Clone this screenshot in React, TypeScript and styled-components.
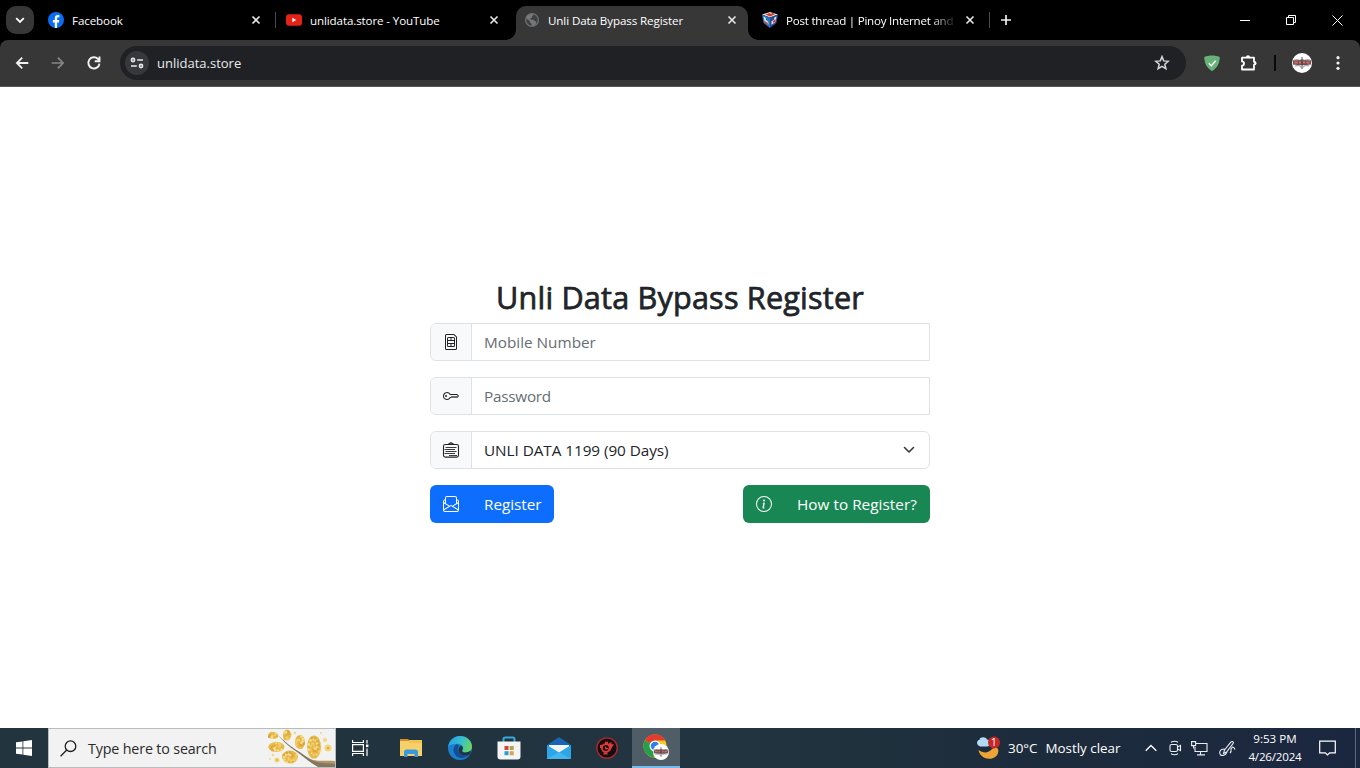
import React from 'react';
import styled, { createGlobalStyle } from 'styled-components';
import { BsSim, BsKey, BsEnvelopePaper, BsInfoCircle } from 'react-icons/bs';

const GlobalStyle = createGlobalStyle`
  * { box-sizing: border-box; }
  html, body { margin: 0; padding: 0; background: #fff; overflow: hidden; }
  body { font-family: 'Open Sans', 'Noto Sans', sans-serif; }
  svg { display: block; flex: none; }
  button, input { font-family: inherit; }
`;

const Screen = styled.div`
  width: 1360px;
  height: 768px;
  display: flex;
  flex-direction: column;
`;

const Label = styled.span<{ $size: number; $ls?: number; $color?: string }>`
  font-size: ${p => p.$size}px;
  letter-spacing: ${p => p.$ls ?? 0}px;
  color: ${p => p.$color ?? '#fff'};
  white-space: nowrap;
`;

/* ---------- Tab strip ---------- */

const TabStrip = styled.header`
  height: 40px;
  flex: none;
  display: flex;
  background: #000;
  padding-left: 6px;
`;

const TabSearch = styled.button`
  width: 28px;
  height: 28px;
  margin: 6px 6px 0 0;
  border: 0;
  padding: 0;
  border-radius: 10px;
  background: #373737;
  display: grid;
  place-items: center;
`;

const TabItem = styled.div<{ $active?: boolean }>`
  position: relative;
  width: 232px;
  height: 34px;
  margin-top: 6px;
  padding: 0 8px 6px;
  display: flex;
  align-items: center;
  gap: 8px;
  background: ${p => (p.$active ? '#373737' : 'transparent')};
  border-radius: 10px 10px 0 0;
  ${p =>
    p.$active &&
    `&::before, &::after {
      content: '';
      position: absolute;
      bottom: 0;
      width: 10px;
      height: 10px;
    }
    &::before { left: -10px; background: radial-gradient(circle at 0 0, transparent 9.5px, #373737 10px); }
    &::after { right: -10px; background: radial-gradient(circle at 100% 0, transparent 9.5px, #373737 10px); }`}
`;

const TabTitle = styled(Label)<{ $fade?: boolean }>`
  flex: 1;
  overflow: hidden;
  line-height: 18px;
  padding-top: 1px;
  ${p => p.$fade && 'mask-image: linear-gradient(90deg, #000 86%, transparent 102%);'}
`;

const TabGap = styled.div<{ $line: boolean }>`
  width: 6px;
  height: 16px;
  margin-top: 12px;
  display: flex;
  justify-content: center;
  &::after {
    content: '';
    width: 1px;
    margin-left: 1px;
    background: ${p => (p.$line ? '#4a4a4a' : 'transparent')};
  }
`;

const NewTab = styled.div`
  width: 28px;
  height: 40px;
  display: grid;
  place-items: center;
`;

const WindowButtons = styled.div`
  margin-left: auto;
  display: flex;
`;

const WindowButton = styled.div`
  width: 46px;
  height: 40px;
  display: grid;
  place-items: center;
`;

/* ---------- Toolbar ---------- */

const ToolbarBack = styled.div`
  flex: none;
  background: #000;
`;

const Toolbar = styled.nav`
  height: 47px;
  background: #373737;
  border-bottom: 1px solid #565656;
  border-radius: 8px 8px 0 0;
  display: flex;
  align-items: center;
  padding: 0 12px;
`;

const NavIcon = styled.div<{ $w: number }>`
  width: ${p => p.$w}px;
  height: 34px;
  display: flex;
  align-items: center;
`;

const AddressBar = styled.div`
  width: 1066px;
  height: 34px;
  margin-right: 18px;
  border-radius: 17px;
  background: #202124;
  display: flex;
  align-items: center;
  padding: 0 16px 0 5px;
  gap: 8px;
  & > svg:last-child { margin-left: auto; }
`;

const SiteInfo = styled.div`
  width: 24px;
  height: 24px;
  border-radius: 50%;
  background: #37383b;
  display: grid;
  place-items: center;
`;

const ToolDivider = styled.div`
  width: 2px;
  height: 16px;
  background: #0a0a0a;
`;

/* ---------- Page ---------- */

const Page = styled.main`
  flex: 1;
  background: #fff;
  display: flex;
  justify-content: center;
  padding-top: 191px;
`;

const Form = styled.form`
  width: 500px;
  display: flex;
  flex-direction: column;
`;

const Title = styled.h1`
  margin: 0 0 8px;
  height: 37px;
  line-height: 39px;
  font-size: 30.6px;
  letter-spacing: 0.2px;
  font-weight: 400;
  -webkit-text-stroke: 0.75px #212529;
  color: #212529;
  text-align: center;
  white-space: nowrap;
`;

const Group = styled.div<{ $round?: boolean }>`
  height: 38px;
  margin-bottom: 16px;
  display: flex;
  border: 1px solid #dee2e6;
  border-radius: ${p => (p.$round ? '6px' : '6px 0 0 6px')};
  overflow: hidden;
`;

const Addon = styled.div`
  width: 41px;
  background: #f8f9fa;
  border-right: 1px solid #dee2e6;
  color: #212529;
  display: grid;
  place-items: center;
`;

const Input = styled.input<{ $ls: number }>`
  flex: 1;
  border: 0;
  outline: 0;
  padding: 0 12px;
  font-size: 15.3px;
  letter-spacing: ${p => p.$ls}px;
  color: #212529;
  &::placeholder { color: #666d73; opacity: 1; }
`;

const Select = styled.div`
  flex: 1;
  padding: 0 12px;
  display: flex;
  align-items: center;
  justify-content: space-between;
`;

const Actions = styled.div`
  display: flex;
  justify-content: space-between;
`;

const Action = styled.button<{ $bg: string; $width: number }>`
  width: ${p => p.$width}px;
  height: 38px;
  border: 0;
  border-radius: 6px;
  background: ${p => p.$bg};
  color: #fff;
  padding: 0 0 0 13px;
  display: flex;
  align-items: center;
  gap: 25px;
`;

/* ---------- Taskbar ---------- */

const Taskbar = styled.footer`
  height: 40px;
  flex: none;
  display: flex;
  background: linear-gradient(90deg, #22343e 0%, #21343f 55%, #1d2c3c 75%, #1b2740 100%);
`;

const TaskSlot = styled.div<{ $active?: boolean; $w?: number }>`
  width: ${p => p.$w ?? 49}px;
  height: 40px;
  display: grid;
  place-items: center;
  ${p => p.$active && 'background: #4e5d66; border-bottom: 2px solid #76b9ed;'}
`;

const SearchBox = styled.div`
  width: 288px;
  height: 40px;
  background: #f2f2f2;
  border: 1px solid #b9bcbe;
  display: flex;
  align-items: center;
  padding-left: 11px;
  gap: 11px;
  & > svg:last-child { margin-left: auto; }
`;

const Tray = styled.div`
  margin-left: auto;
  display: flex;
  align-items: center;
`;

const Weather = styled.div`
  display: flex;
  align-items: center;
  gap: 8px;
  width: 164px;
`;

const TrayIcon = styled.div<{ $w: number }>`
  width: ${p => p.$w}px;
  display: flex;
  align-items: center;
  justify-content: center;
`;

const Clock = styled.div`
  width: 64px;
  display: flex;
  flex-direction: column;
  align-items: center;
  line-height: 18px;
  padding-bottom: 1px;
`;

const ShowDesktop = styled.div`
  width: 5px;
  height: 40px;
  border-left: 1px solid #5d6979;
`;

const WeatherBadge = styled.div`
  position: relative;
  width: 24px;
  height: 24px;
  span {
    position: absolute;
    left: 15px;
    top: 0;
    font-size: 10px;
    line-height: 13px;
    color: #fff;
  }
`;

/* ---------- Drawings ---------- */

const CloseGlyph = () => (
  <svg width="16" height="16" viewBox="0 0 16 16" stroke="#e8e8e8" strokeWidth="1.6">
    <path d="M4.5 4.500l7 7M11.500 4.500l-7 7" />
  </svg>
);

const FacebookIcon = () => (
  <svg width="16" height="16" viewBox="0 0 16 16">
    <circle cx="8" cy="8" r="8" fill="#0b6cf4" />
    <path fill="#fff" d="M6.8 16v-5.6H4.9V8h1.9V6.7c0-2.6 1.2-3.6 3.2-3.6.6 0 1 .05 1.4.13v2.1h-1c-1 0-1.3.5-1.3 1.4V8h2.2l-.4 2.4H9.1V16z" />
  </svg>
);

const YouTubeIcon = () => (
  <svg width="16" height="16" viewBox="0 0 16 16">
    <rect y="2.2" width="16" height="11.6" rx="3" fill="#e62117" />
    <path d="M6.3 5.7v4.6l4-2.3z" fill="#fff" />
  </svg>
);

const GlobeIcon = () => (
  <svg width="16" height="16" viewBox="0 0 16 16">
    <circle cx="8" cy="8" r="6.4" fill="#3f4143" stroke="#6c6e70" strokeWidth="1.3" />
    <path fill="#757779" d="M2 6.3c1-2.7 3.400-4.600 6.300-4.700L9.600 3 8 4.200v1.500l-1.700.8.500 1.200h2.700l1 1.400 1.800.4-.5 2.600-2.600 2.100-1.700-.3.300-2-1.800-1.500-.4-1.600z" />
  </svg>
);

const CubeIcon = () => (
  <svg width="16" height="16" viewBox="0 0 16 16">
    <path d="M8 0l8 2.600-8 3-8-3z" fill="#e8e3e0" />
    <path d="M0 2.600l8 3V16l-6.500-5z" fill="#2676bd" />
    <path d="M16 2.600l-8 3V16l6.500-5z" fill="#2b4d94" />
    <path d="M3.500 2.500l4-1.600 1.200.8 2-.7 2.300 1.300-5 2.200z" fill="#d43a2b" />
    <path d="M1.400 4.500l2 1 .5 2.500 2.400 1.700.2 2.700-3.800-3z" fill="#e9eef5" />
    <path d="M2.500 8.500l3.600 2.500v2.300l-3-2.200z" fill="#e04a32" />
    <path d="M14.500 4.500l-2 .8-.5 2.500-2.500 1.500v3.500l3.700-2.600z" fill="#dce6f2" />
    <path d="M13.500 7l-3 2.500 1 1.500 1.600-1.200z" fill="#d63c2b" />
  </svg>
);

const SettingsGlyph = () => (
  <svg width="14" height="14" viewBox="0 0 14 14" fill="none" stroke="#e8eaed" strokeWidth="1.6">
    <circle cx="3" cy="4" r="1.600" />
    <path d="M7.200 4H13M1 10h5.800" />
    <circle cx="11" cy="10" r="1.600" />
  </svg>
);

const StarIcon = () => (
  <svg width="16" height="16" viewBox="0 0 16 16" fill="none" stroke="#d5d6d8" strokeWidth="1.500">
    <path d="M8 1.600l1.700 4.300 4.600.35-3.500 3 1.100 4.500L8 11.300l-3.900 2.450 1.100-4.500-3.500-3 4.600-.35z" />
  </svg>
);

const ShieldIcon = () => (
  <svg width="16" height="17" viewBox="0 0 16 17">
    <path d="M8 .5C5.500.5 2.500 1 .3 2c0 2.500 0 9.200 7.700 14.300C15.700 11.200 15.700 4.500 15.700 2 13.500 1 10.500.5 8 .5z" fill="#67b279" />
    <path d="M4.800 8.200l2.600 2.600 4.300-5" fill="none" stroke="#fff" strokeWidth="1.400" />
  </svg>
);

const PuzzleIcon = () => (
  <svg width="18" height="18" viewBox="0 0 18 18">
    <path
      d="M3 3.700h11v4.100a1.400 1.400 0 0 1 0 2.800V15.500H2v-3.800c2.700-.3 2.700-4 0-4.300V3.700z"
      fill="none"
      stroke="#fff"
      strokeWidth="1.800"
      strokeLinejoin="round"
    />
    <path d="M6 3.300a2 2 0 0 1 4 0zM14.500 7.200a2 2 0 0 1 0 4z" fill="#fff" />
  </svg>
);

const Badge = ({ size }: { size: number }) => (
  <svg width={size} height={size} viewBox="0 0 20 20">
    <circle cx="10" cy="10" r="10" fill="#fff" />
    <path d="M1 7q4-1.200 6.500-.2L10 6l2.500.8q3-1 6.500.2v1.500H1z" fill="#8d8d92" />
    <path d="M1 8q9-1.500 18 0v3.500q-9 1.300-18 0z" fill="#6d5055" />
    <path d="M2.500 8.600h3.200v1.800H2.500zM7 8.400h2v2H7zM11 8.400h2.200v1.900H11zM14.500 8.600h3v1.800h-3z" fill="#e4685e" />
    <path d="M3 13q3.500-1 5.500.3L10 16l1.500-2.700Q14 12 17 13" fill="none" stroke="#8b8b90" strokeWidth=".9" />
    <path d="M10 4v10.500" stroke="#4a4448" strokeWidth=".9" />
  </svg>
);

const CardIcon = () => (
  <svg width="18" height="16" viewBox="0 0 18 16" fill="none" stroke="#212529">
    <rect x="1.500" y="2.500" width="15" height="12.600" rx="1.800" strokeWidth="1.100" />
    <path d="M6 2.500L9 .7l3 1.800" strokeWidth="1.100" />
    <path d="M3.500 5.500h11M2.500 7.500h10.500M3.500 9.500h11M2.500 11.500h10.500M7 13.500h8" strokeWidth=".9" />
  </svg>
);

const clusters = [
  [5, 6.500, 5, 3.500],
  [19, 6, 4, 5.500],
  [32, 13, 5, 7],
  [8.500, 18, 8, 5],
  [22, 28, 8, 6.500],
  [46, 18, 7, 11.500],
];
const shades = ['#f3d06b', '#e9bb48', '#d9a640', '#f7dd8a', '#e5b54a'];
const petals = clusters.flatMap(([cx, cy, rx, ry], c) =>
  Array.from({ length: Math.round(rx * ry * 0.55) }, (_, i, ) => {
    const r = Math.sqrt((i + 0.5) / (rx * ry * 0.55)) * 0.88;
    const a = i * 2.4 + c;
    return { x: cx + rx * r * Math.cos(a), y: cy + ry * r * Math.sin(a), fill: shades[(i * 3 + c) % shades.length] };
  })
);

const SearchArt = () => (
  <svg width="67" height="38" viewBox="0 0 67 38">
    {clusters.map(([cx, cy, rx, ry]) => (
      <ellipse key={cx} cx={cx} cy={cy} rx={rx} ry={ry} fill="#e8bc4a" />
    ))}
    {petals.map((p, i) => (
      <circle key={i} cx={p.x} cy={p.y} r="1.300" fill={p.fill} />
    ))}
    <g fill="#f5d777">
      <circle cx="57" cy="11" r="2" /><circle cx="60" cy="19" r="3.500" /><circle cx="5" cy="26" r="1.300" />
      <circle cx="9" cy="31" r="2.600" /><circle cx="2" cy="30" r="1" /><circle cx="27" cy="4" r="1.200" />
      <circle cx="53" cy="4" r="1" />
    </g>
    <circle cx="60" cy="19" r="1.300" fill="#e0aa3c" />
    <circle cx="9" cy="31" r="1" fill="#e0aa3c" />
    <path d="M8 4c9 9 14 13 22 18 7 4 10 8 18 10h19v6H50c-9-5-14-10-21-15C20 17 14 11 8 4z" fill="#85765f" />
    <path d="M42 30c8 3 16 1 25 2v3c-9-1-17 0-25-5z" fill="#b0975f" />
  </svg>
);

const FolderIcon = () => (
  <svg width="22" height="20" viewBox="0 0 22 20">
    <path d="M0 1h8l2 2H0z" fill="#d9902a" />
    <path d="M0 3h22v15H0z" fill="#f6d068" />
    <path d="M9 2h13v3H9z" fill="#f3c350" />
    <path d="M4 19v-5q0-2.500 2.500-2.500h9Q18 11.500 18 14v5h-3.500v-3h-7v3z" fill="#3a9ae0" />
  </svg>
);

const EdgeIcon = () => (
  <svg width="24" height="24" viewBox="0 0 24 24">
    <defs>
      <linearGradient id="edgeTop" x1="0" y1=".3" x2="1" y2=".6">
        <stop offset="0" stopColor="#2a9ee4" />
        <stop offset=".5" stopColor="#36bfd0" />
        <stop offset="1" stopColor="#6bd65a" />
      </linearGradient>
    </defs>
    <circle cx="12" cy="12" r="12" fill="#1b7fd0" />
    <path d="M.2 10.500C1.300 4.500 6 0 12 0c7 0 12 5 12 10.500 0 4-3.400 6-6.500 6-2.700 0-3.900-1.100-3-2.300 1.900-2.500-.3-6.400-5-6.400C5.500 7.800 1 9 .2 10.500z" fill="url(#edgeTop)" />
    <path d="M9 8.300c-4 1.800-4.500 7-1.700 10.700 2.900 3.700 8.700 4.300 14.500-.5-2 .9-8.300 1.500-11-2.200C9 13.600 9.600 11 11.500 9.800z" fill="#124d96" />
    <path d="M13.600 9.800c1.500 1.500 1.600 3 .6 4.400-.7 1.400 1.300 2.300 3.300 2.300 1.900 0 3.800-.8 5-2 .5 1.500.2 2.700-.6 4-3 1.200-8 1.400-10.400-1.500-1.900-2.600-1.300-6.300 2.100-7.200z" fill="#21353f" />
  </svg>
);

const StoreIcon = () => (
  <svg width="24" height="24" viewBox="0 0 24 24">
    <path d="M6.500 6V3.200Q6.500 1.500 8.200 1.500h7.600q1.700 0 1.700 1.700V6" fill="none" stroke="#35a9dc" strokeWidth="2" />
    <path d="M.5 5.500h23v15q0 3-3 3h-17q-3 0-3-3z" fill="#f4f4f4" />
    <path d="M7.500 10h4v4h-4z" fill="#d9432f" /><path d="M12.700 10h4v4h-4z" fill="#b3a050" />
    <path d="M7.500 15.200h4v4h-4z" fill="#2b9ad8" /><path d="M12.700 15.200h4v4h-4z" fill="#d0a450" />
  </svg>
);

const MailIcon = () => (
  <svg width="24" height="22" viewBox="0 0 24 22">
    <path d="M0 8L12 0l12 8v3H0z" fill="#1865b5" />
    <path d="M2 8h20v3l-10 7L2 11z" fill="#f2f5f8" />
    <path d="M0 8l12 7.500L24 8v14H0z" fill="#2ea5e6" />
    <path d="M0 22l12-7 12 7z" fill="#45b6ee" />
    <path d="M3 8h18l-9 6z" fill="#f2f5f8" />
  </svg>
);

const RedDiskIcon = () => (
  <svg width="22" height="22" viewBox="0 0 22 22">
    <circle cx="11" cy="11" r="10.200" fill="#130f12" stroke="#b3262b" strokeWidth="1.300" />
    <circle cx="9.800" cy="11" r="3.900" fill="none" stroke="#e23a36" strokeWidth="1.800" />
    <path d="M9 4.800h3v2.500H9zM4 8h2.500v3H4zM7.500 15.500h4v2h-4zM12 7l3.500-2v2.300H18l-2.500 4-1.500 3-2-1 1.500-3z" fill="#e23a36" />
    <path d="M9.600 9.500v2.200h2.500" fill="none" stroke="#e23a36" strokeWidth="1.300" />
  </svg>
);

const ChromeIcon = () => (
  <svg width="26" height="26" viewBox="0 0 26 26">
    <circle cx="12" cy="12" r="11.500" fill="#f7c927" />
    <path d="M12 12L2 6.200A11.500 11.500 0 0 0 11 23.500z" fill="#24a148" />
    <path d="M12 12L2 6.200A11.500 11.500 0 0 1 22.200 6.500H12z" fill="#e33b2e" />
    <circle cx="12" cy="12" r="5.500" fill="#fff" />
    <circle cx="12" cy="12" r="4.200" fill="#2f7de9" />
    <g transform="translate(10 10)"><Badge size={16} /></g>
  </svg>
);

const WeatherIcon = () => (
  <svg width="24" height="24" viewBox="0 0 24 24">
    <path d="M20.500 11.500c3.500 1.500 2.600 11-7 11.300C7 23 3 18 2.500 14c4 3 9 3.500 12.500 0 1.500-1.500 3-2.600 5.500-2.500z" fill="#eda336" />
    <path d="M4 10.500a3.500 3.500 0 0 1-.5-6.800C4 .500 10 .5 11 3.500c4 0 4 7 0 7z" fill="#b4dbf4" />
    <circle cx="18" cy="6.500" r="6" fill="#c62828" />
  </svg>
);

const tabs = [
  { title: 'Facebook', icon: <FacebookIcon />, ls: -0.1, line: true },
  { title: 'unlidata.store - YouTube', icon: <YouTubeIcon />, ls: -0.12, line: false },
  { title: 'Unli Data Bypass Register', icon: <GlobeIcon />, ls: -0.1, line: false, active: true },
  { title: 'Post thread | Pinoy Internet and', icon: <CubeIcon />, ls: -0.24, line: true, fade: true },
];

export default function App() {
  return (
    <Screen>
      <GlobalStyle />
      <TabStrip>
        <TabSearch type="button">
          <svg width="12" height="12" viewBox="0 0 12 12" fill="none" stroke="#fff" strokeWidth="1.800">
            <path d="M2.200 4.200L6 8l3.800-3.800" />
          </svg>
        </TabSearch>
        {tabs.map(t => (
          <React.Fragment key={t.title}>
            <TabItem $active={t.active}>
              {t.icon}
              <TabTitle $size={11.6} $ls={t.ls} $fade={t.fade}>{t.title}</TabTitle>
              <CloseGlyph />
            </TabItem>
            <TabGap $line={t.line} />
          </React.Fragment>
        ))}
        <NewTab>
          <svg width="12" height="12" viewBox="0 0 12 12" stroke="#f1f1f1" strokeWidth="1.700">
            <path d="M6 1v10M1 6h10" />
          </svg>
        </NewTab>
        <WindowButtons>
          <WindowButton>
            <svg width="10" height="11" viewBox="0 0 10 11"><path d="M0 5.500h10" stroke="#fff" /></svg>
          </WindowButton>
          <WindowButton>
            <svg width="10" height="10" viewBox="0 0 10 10" fill="none" stroke="#fff">
              <path d="M.5 2.500h7v7h-7zM2.500 2.500v-2h7v7h-2" />
            </svg>
          </WindowButton>
          <WindowButton>
            <svg width="11" height="11" viewBox="0 0 11 11" stroke="#fff"><path d="M.5.5l10 10M10.500.5l-10 10" /></svg>
          </WindowButton>
        </WindowButtons>
      </TabStrip>

      <ToolbarBack>
        <Toolbar>
          <NavIcon $w={36}>
            <svg width="20" height="20" viewBox="0 0 20 20" fill="none" stroke="#f1f1f1" strokeWidth="1.800">
              <path d="M16.300 10H5M10.200 4.700L4.900 10l5.300 5.300" />
            </svg>
          </NavIcon>
          <NavIcon $w={36}>
            <svg width="20" height="20" viewBox="0 0 20 20" fill="none" stroke="#868686" strokeWidth="1.700">
              <path d="M3.700 10H15M9.800 4.700l5.300 5.300-5.300 5.300" />
            </svg>
          </NavIcon>
          <NavIcon $w={36}>
            <svg width="20" height="20" viewBox="0 0 20 20" fill="none" stroke="#f1f1f1" strokeWidth="1.900">
              <path d="M15.500 10.600A5.600 5.600 0 1 1 14 6L15 7M15.500 3.500v4.800h-4.800" />
            </svg>
          </NavIcon>
          <AddressBar>
            <SiteInfo><SettingsGlyph /></SiteInfo>
            <Label $size={13} $color="#e8eaed">unlidata.store</Label>
            <StarIcon />
          </AddressBar>
          <NavIcon $w={36}><ShieldIcon /></NavIcon>
          <NavIcon $w={34}><PuzzleIcon /></NavIcon>
          <NavIcon $w={18}><ToolDivider /></NavIcon>
          <NavIcon $w={40}><Badge size={20} /></NavIcon>
          <svg width="12" height="16" viewBox="0 0 12 16" fill="#f1f1f1">
            <circle cx="6" cy="2.700" r="1.600" /><circle cx="6" cy="8" r="1.600" /><circle cx="6" cy="13.300" r="1.600" />
          </svg>
        </Toolbar>
      </ToolbarBack>

      <Page>
        <Form>
          <Title>Unli Data Bypass Register</Title>
          <Group>
            <Addon><BsSim size={16} /></Addon>
            <Input $ls={0} placeholder="Mobile Number" />
          </Group>
          <Group>
            <Addon><BsKey size={16} /></Addon>
            <Input $ls={-0.25} placeholder="Password" />
          </Group>
          <Group $round>
            <Addon><CardIcon /></Addon>
            <Select>
              <Label $size={15.3} $ls={-0.05} $color="#212529">UNLI DATA 1199 (90 Days)</Label>
              <svg width="16" height="16" viewBox="0 0 16 16" fill="none" stroke="#343a40" strokeWidth="1.600" strokeLinecap="round" strokeLinejoin="round">
                <path d="M3.500 5.500L8 10l4.500-4.500" />
              </svg>
            </Select>
          </Group>
          <Actions>
            <Action type="button" $bg="#0d6efd" $width={124}>
              <BsEnvelopePaper size={16} />
              <Label $size={15.3} $ls={-0.05}>Register</Label>
            </Action>
            <Action type="button" $bg="#198754" $width={187}>
              <BsInfoCircle size={16} />
              <Label $size={15.3} $ls={0.03}>How to Register?</Label>
            </Action>
          </Actions>
        </Form>
      </Page>

      <Taskbar>
        <TaskSlot $w={48}>
          <svg width="16" height="16" viewBox="0 0 16 16" fill="#fff">
            <path d="M0 2.300L6.500 1.400v6.200H0zM7.300 1.300L16 0v7.600H7.300zM0 8.400h6.500v6.200L0 13.700zM7.300 8.400H16V16l-8.700-1.300z" />
          </svg>
        </TaskSlot>
        <SearchBox>
          <svg width="17" height="17" viewBox="0 0 17 17" fill="none" stroke="#1d1d1d" strokeWidth="1.300">
            <circle cx="10.500" cy="6.200" r="5.300" /><path d="M6.700 10L.6 16.200" />
          </svg>
          <Label $size={14.3} $ls={-0.16} $color="#2b2b2b">Type here to search</Label>
          <SearchArt />
        </SearchBox>
        <TaskSlot>
          <svg width="17" height="16" viewBox="0 0 17 16" fill="none" stroke="#fff" strokeWidth="1.200">
            <path d="M.6 4.600h10.800v6.800H.6zM.6 0v2.500h10.800V0M.6 16v-2.500h10.800V16M15 0v3.500M15 8.500V16" />
            <path d="M14 4.500h2.400v2.600H14z" fill="#fff" stroke="none" />
          </svg>
        </TaskSlot>
        <TaskSlot $w={52}><FolderIcon /></TaskSlot>
        <TaskSlot $w={46}><EdgeIcon /></TaskSlot>
        <TaskSlot $w={52}><StoreIcon /></TaskSlot>
        <TaskSlot $w={47}><MailIcon /></TaskSlot>
        <TaskSlot $w={50}><RedDiskIcon /></TaskSlot>
        <TaskSlot $active $w={48}><ChromeIcon /></TaskSlot>
        <Tray>
          <Weather>
            <WeatherBadge><WeatherIcon /><span>1</span></WeatherBadge>
            <Label $size={13.4}>30°C</Label>
            <Label $size={13.4}>Mostly clear</Label>
          </Weather>
          <TrayIcon $w={22}>
            <svg width="12" height="8" viewBox="0 0 12 8" fill="none" stroke="#fff" strokeWidth="1.300"><path d="M.7 6.800L6 1.500l5.300 5.300" /></svg>
          </TrayIcon>
          <TrayIcon $w={26}>
            <svg width="13" height="16" viewBox="0 0 13 16" fill="none" stroke="#e9edf2" strokeWidth="1.100">
              <rect x="1" y="4.500" width="7.500" height="7" rx="1.500" /><path d="M8.500 7l3-1.500v5L8.500 9M2 2.200Q5.500.2 9 2.200M2 13.800q3.500 2 7 0" />
            </svg>
          </TrayIcon>
          <TrayIcon $w={23}>
            <svg width="17" height="15" viewBox="0 0 17 15" fill="none" stroke="#e9edf2" strokeWidth="1.100">
              <path d="M5 2.500h11v8H4V6M9.500 10.500v3M6 13.900h8" /><path d="M.6.600h4v4h-4zM2.600 4.600v3" />
            </svg>
          </TrayIcon>
          <TrayIcon $w={32}>
            <svg width="17" height="17" viewBox="0 0 17 17" fill="none" stroke="#e9edf2" strokeWidth="1.100">
              <path d="M4.500 13.500l1-3.500 6.500-8q1.500-1.200 2.300.2.300.8-.3 1.500l-6.500 8.300zM5.500 9q-4.500 0-4.800 3.500Q1 16 4 15.500q3-.6 4-3.500M11 13q1.500-1.500 1-4l1.500-2q2 .5 2.500 2.500" />
            </svg>
          </TrayIcon>
          <Clock>
            <Label $size={11.6}>9:53 PM</Label>
            <Label $size={11.6} $ls={-0.2}>4/26/2024</Label>
          </Clock>
          <TrayIcon $w={40}>
            <svg width="17" height="17" viewBox="0 0 17 17" fill="none" stroke="#fff" strokeWidth="1.200">
              <path d="M.7 1.200h15.600v11.600h-5.600L8.500 15l-2.200-2.200H.7z" />
            </svg>
          </TrayIcon>
          <TrayIcon $w={8} />
          <ShowDesktop />
        </Tray>
      </Taskbar>
    </Screen>
  );
}
